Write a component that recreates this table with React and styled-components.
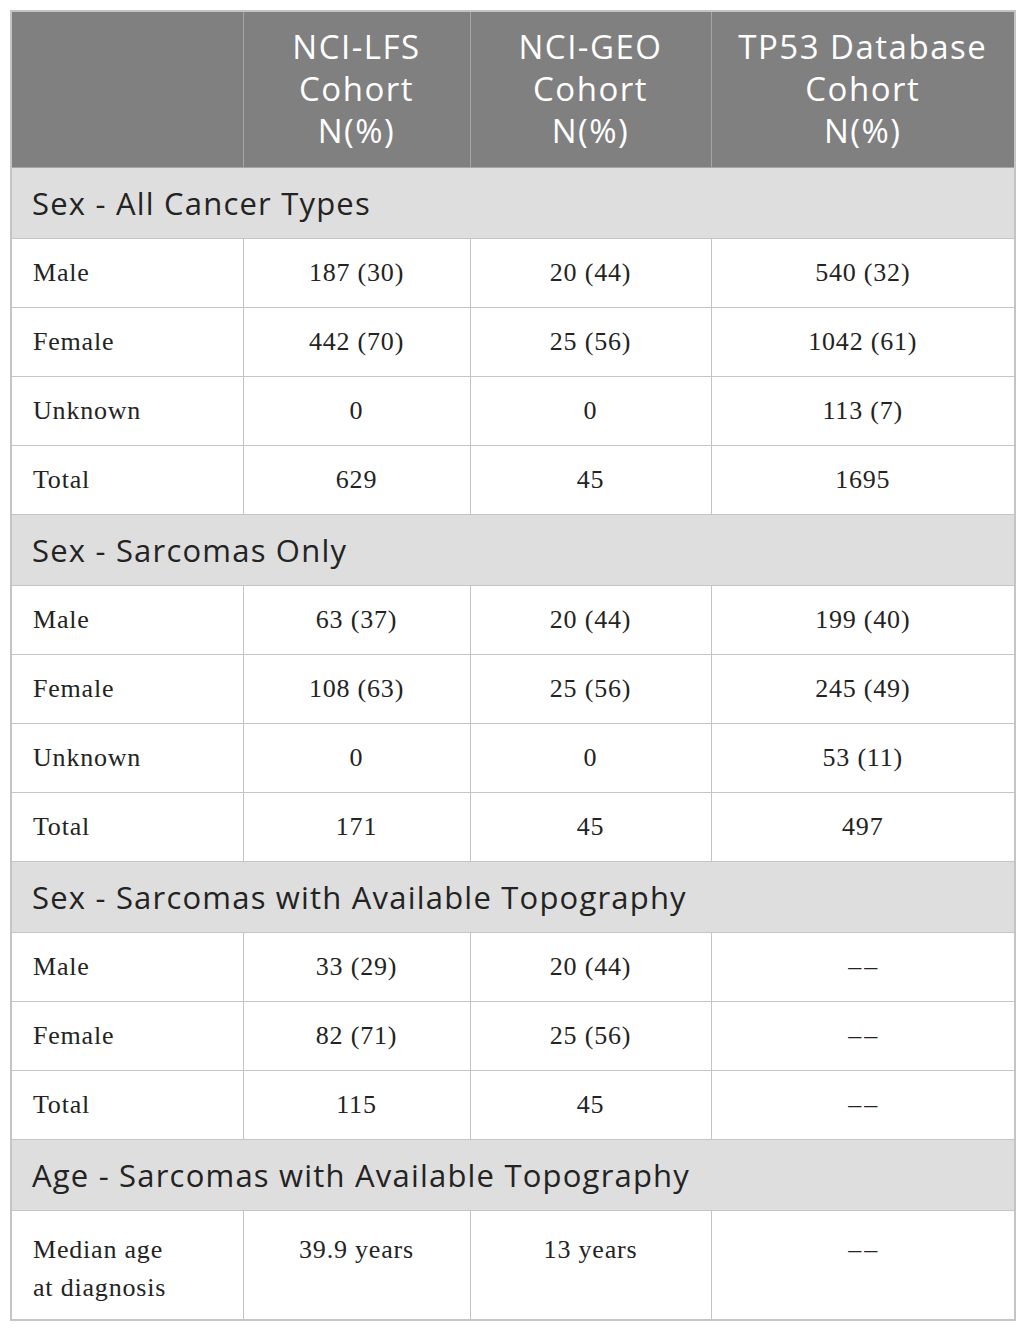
import styled, { createGlobalStyle } from "styled-components";

const GlobalStyle = createGlobalStyle`
  body {
    margin: 0;
    background: #ffffff;
  }
`;

const Page = styled.div`
  padding: 10px 11px 10px 10px;
`;

const Table = styled.table`
  width: 1004px;
  border-collapse: collapse;
  table-layout: fixed;
  border: 2px solid #c4c4c4;
`;

const HeadCell = styled.th`
  background-color: #7f807f;
  color: #ffffff;
  font-family: "Open Sans", "Liberation Sans", sans-serif;
  font-weight: 400;
  font-size: 33px;
  line-height: 42px;
  letter-spacing: 1.5px;
  text-align: center;
  padding: 14px 4px 15px;
  border: 1px solid #a5a6a5;
`;

const SectionCell = styled.td`
  background-color: #dedede;
  color: #232323;
  font-family: "Open Sans", "Liberation Sans", sans-serif;
  font-size: 31px;
  line-height: 40px;
  letter-spacing: 1.2px;
  padding: 15px 20px 15px 20px;
  border: 1px solid #c4c4c4;
  white-space: nowrap;
`;

const Cell = styled.td`
  font-family: "Liberation Serif", "DejaVu Serif", serif;
  font-size: 26px;
  line-height: 38px;
  letter-spacing: 0.8px;
  color: #232323;
  border: 1px solid #c4c4c4;
  padding: ${p => (p.$top ? "20px 10px 12px" : "15px 10px")};
  padding-left: ${p => (p.$label ? "21px" : "10px")};
  text-align: ${p => (p.$label ? "left" : "center")};
  vertical-align: ${p => (p.$top ? "top" : "middle")};
`;

const Dash = styled.span`
  letter-spacing: 3px;
  margin-right: -3px;
`;

const columns = [232, 227, 241, 304];

const NONE = "none";

const sections = [
  {
    title: "Sex - All Cancer Types",
    rows: [
      ["Male", "187 (30)", "20 (44)", "540 (32)"],
      ["Female", "442 (70)", "25 (56)", "1042 (61)"],
      ["Unknown", "0", "0", "113 (7)"],
      ["Total", "629", "45", "1695"],
    ],
  },
  {
    title: "Sex - Sarcomas Only",
    rows: [
      ["Male", "63 (37)", "20 (44)", "199 (40)"],
      ["Female", "108 (63)", "25 (56)", "245 (49)"],
      ["Unknown", "0", "0", "53 (11)"],
      ["Total", "171", "45", "497"],
    ],
  },
  {
    title: "Sex - Sarcomas with Available Topography",
    rows: [
      ["Male", "33 (29)", "20 (44)", NONE],
      ["Female", "82 (71)", "25 (56)", NONE],
      ["Total", "115", "45", NONE],
    ],
  },
];

const show = value => (value === NONE ? <Dash>––</Dash> : value);

function App() {
  return (
    <Page>
      <GlobalStyle />
      <Table>
        <colgroup>
          {columns.map((w, i) => (
            <col key={i} style={{ width: w }} />
          ))}
        </colgroup>
        <thead>
          <tr>
            <HeadCell />
            <HeadCell>
              NCI-LFS<br />Cohort<br />N(%)
            </HeadCell>
            <HeadCell>
              NCI-GEO<br />Cohort<br />N(%)
            </HeadCell>
            <HeadCell>
              TP53 Database<br />Cohort<br />N(%)
            </HeadCell>
          </tr>
        </thead>
        <tbody>
          {sections.map(section => [
            <tr key={section.title}>
              <SectionCell colSpan={4}>{section.title}</SectionCell>
            </tr>,
            ...section.rows.map(row => (
              <tr key={section.title + row[0]}>
                {row.map((value, i) => (
                  <Cell key={i} $label={i === 0}>
                    {show(value)}
                  </Cell>
                ))}
              </tr>
            )),
          ])}
          <tr>
            <SectionCell colSpan={4}>Age - Sarcomas with Available Topography</SectionCell>
          </tr>
          <tr>
            <Cell $label $top>
              Median age<br />at diagnosis
            </Cell>
            <Cell $top>39.9 years</Cell>
            <Cell $top>13 years</Cell>
            <Cell $top>{show(NONE)}</Cell>
          </tr>
        </tbody>
      </Table>
    </Page>
  );
}

export default App;
